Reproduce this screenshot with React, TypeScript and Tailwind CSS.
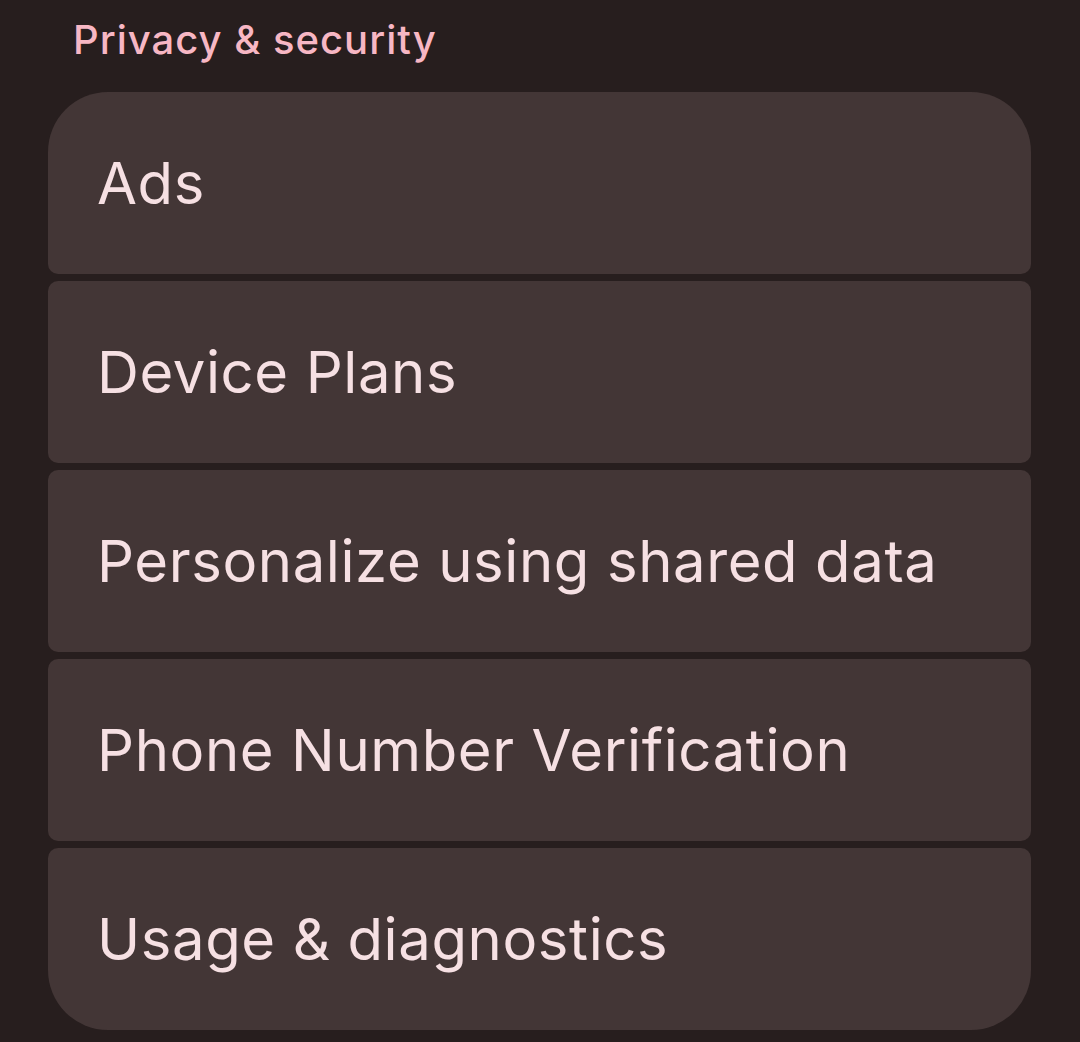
const items = [
  "Ads",
  "Device Plans",
  "Personalize using shared data",
  "Phone Number Verification",
  "Usage & diagnostics",
];

export default function App() {
  return (
    <div
      className="w-[1080px] h-[1042px] bg-[#271e1e] overflow-hidden"
      style={{ fontFamily: "Inter, Roboto, sans-serif" }}
    >
      <div className="pl-[73px] pt-[14px] h-[92px]">
        <h2 className="text-[40px] leading-[52px] font-medium text-[#f7b7c4] tracking-[1px]">
          Privacy &amp; security
        </h2>
      </div>
      <div className="ml-[48px] w-[983px] flex flex-col gap-[7px]">
        {items.map((label, i) => (
          <div
            key={label}
            className={
              "h-[182px] bg-[#433636] flex items-center pl-[49px] " +
              (i === 0
                ? "rounded-t-[60px] rounded-b-[10px]"
                : i === items.length - 1
                ? "rounded-b-[60px] rounded-t-[10px]"
                : "rounded-[10px]")
            }
          >
            <span className="text-[58px] text-[#f6e0e3] leading-none tracking-[0.6px]">
              {label}
            </span>
          </div>
        ))}
      </div>
    </div>
  );
}
